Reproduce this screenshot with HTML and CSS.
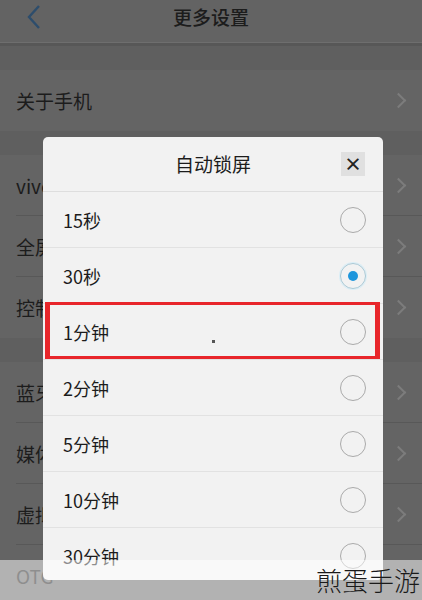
FILE: index.html
```html
<!DOCTYPE html>
<html lang="zh-CN">
<head>
    <meta charset="UTF-8">
    <meta name="viewport" content="width=device-width,initial-scale=1.0" />
    <title>更多设置</title>
    <link rel="stylesheet" href="styles.css">
</head>
<body>
  <header class="header">
    <svg class="back" width="16" height="26" viewBox="0 0 16 26"><path d="M13 2 L3 13 L13 24" fill="none" stroke="#2d4d6c" stroke-width="2.4"/></svg>
    <div class="htitle">更多设置</div>
  </header>
  <div class="gap"></div>
  <div class="row">关于手机<span class="arr"></span></div>
  <div class="gap"></div>
  <div class="row line">vivo账户<span class="arr"></span></div>
  <div class="row line">全屏手势<span class="arr"></span></div>
  <div class="row">控制中心<span class="arr"></span></div>
  <div class="gap"></div>
  <div class="row line">蓝牙设置<span class="arr"></span></div>
  <div class="row line">媒体音量<span class="arr"></span></div>
  <div class="row line">虚拟按键<span class="arr"></span></div>
  <div class="row">OTG<span class="arr"></span></div>

  <div class="dialog">
    <div class="dtitle">自动锁屏<span class="close">×</span></div>
    <div class="opt">15秒<span class="radio"></span></div>
    <div class="opt">30秒<span class="radio on"></span></div>
    <div class="opt hl">1分钟<span class="radio"></span><i class="dot"></i></div>
    <div class="opt">2分钟<span class="radio"></span></div>
    <div class="opt">5分钟<span class="radio"></span></div>
    <div class="opt">10分钟<span class="radio"></span></div>
    <div class="opt">30分钟<span class="radio"></span></div>
  </div>

  <div class="mark">煎蛋手游</div>
</body>
</html>
```

FILE: styles.css
```css
html,body,div,span{margin:0;padding:0;}
html,body{
  width:100%;
  height:100%;
  overflow:hidden;
  background-color:#636363;
  font-family:"Noto Sans CJK SC","Noto Sans",sans-serif;
  color:#1c1c1c;
}
.header{
  height:43px;
  display:flex;
  align-items:center;
  justify-content:center;
  border-bottom:3px solid #575757;
  box-shadow:0 -1px 0 #6e6e6e inset;
}
.back{
  position:absolute;
  left:26px;
  top:4px;
}
.htitle{
  font-size:19px;
  font-weight:500;
  margin-top:-10px;
}
.gap{
  height:24px;
  background-color:#5f5f5f;
}
.row{
  height:61px;
  display:flex;
  align-items:center;
  justify-content:space-between;
  padding:0 18px 0 16px;
  font-size:19px;
  background-color:#646464;
}
.line{
  background-image:linear-gradient(#585858,#585858);
  background-size:calc(100% - 16px) 1px;
  background-position:16px 100%;
  background-repeat:no-repeat;
}
.arr{
  width:9px;
  height:9px;
  border-top:2px solid #7c7c7c;
  border-right:2px solid #7c7c7c;
  transform:rotate(45deg);
}
.dialog{
  position:absolute;
  left:43px;
  top:137px;
  width:340px;
  height:443px;
  background-color:#f2f2f2;
  border-radius:5px;
  overflow:hidden;
}
.dtitle{
  height:54px;
  line-height:54px;
  text-align:center;
  font-size:19px;
  border-bottom:1px solid #dedede;
  position:relative;
}
.close{
  position:absolute;
  right:18px;
  top:15px;
  width:24px;
  height:24px;
  line-height:23px;
  background-color:#e0e0e0;
  font-size:18px;
  font-weight:bold;
  color:#222;
}
.opt{
  height:55px;
  display:flex;
  align-items:center;
  justify-content:space-between;
  padding:0 17px 0 20px;
  font-size:18px;
  border-bottom:1px solid #e2e2e2;
  position:relative;
}
.radio{
  width:24px;
  height:24px;
  border:1.5px solid #aaa;
  border-radius:50%;
  display:flex;
  align-items:center;
  justify-content:center;
}
.radio.on{
  border-color:#a9c9d6;
  box-shadow:0 0 0 1px #dbeef6;
}
.radio.on::after{
  content:"";
  width:10px;
  height:10px;
  border-radius:50%;
  background-color:#1e96dc;
}
.hl::after{
  content:"";
  position:absolute;
  left:2px;
  right:3px;
  top:-2px;
  bottom:0;
  border:3px solid #e8262b;
  border-left-width:5px;
  border-right-width:5px;
}
.dot{
  position:absolute;
  left:169px;
  top:36px;
  width:3px;
  height:3px;
  background-color:#555;
}
.mark{
  position:absolute;
  left:0;
  right:0;
  bottom:0;
  height:40px;
  background-color:rgba(255,255,255,0.5);
  text-align:right;
  padding-right:2px;
  font-size:26px;
  font-weight:300;
  line-height:40px;
  color:#1a1a1a;
}
```
